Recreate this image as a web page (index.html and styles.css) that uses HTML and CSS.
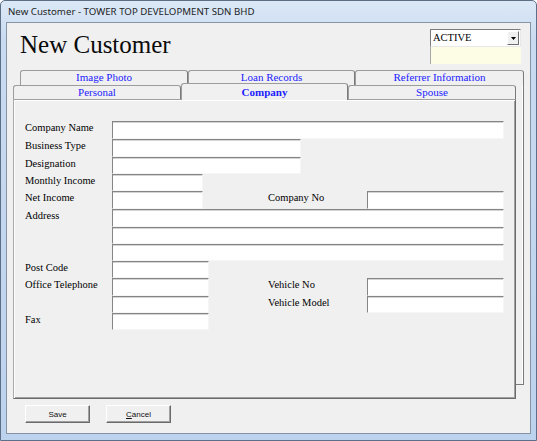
FILE: index.html
```html
<!DOCTYPE html>
<html lang="en">
<head>
    <meta charset="UTF-8">
    <title>New Customer</title>
    <link rel="stylesheet" href="styles.css">
</head>
<body>
    <div class="window">
        <div class="titlebar">New Customer - TOWER TOP DEVELOPMENT SDN BHD</div>
        <div class="client">
            <div class="header">
                <h1 class="form-title">New Customer</h1>
                <div class="status">
                    <div class="status-select">
                        <span class="status-value">ACTIVE</span>
                        <span class="drop-btn">
                            <svg width="5" height="3" viewBox="0 0 5 3"><path d="M0 0h5L2.5 3z" fill="#000"/></svg>
                        </span>
                    </div>
                    <div class="status-note"></div>
                </div>
            </div>

            <div class="tab-control">
                <div class="tab-row tab-row-back">
                    <div class="tab tab-a">Image Photo</div>
                    <div class="tab tab-b">Loan Records</div>
                    <div class="tab tab-c">Referrer Information</div>
                </div>
                <div class="tab-row tab-row-front">
                    <div class="tab tab-a">Personal</div>
                    <div class="tab tab-b selected">Company</div>
                    <div class="tab tab-a">Spouse</div>
                </div>
                <div class="tab-page">
                    <div class="form-grid">
                        <label class="lbl">Company Name</label>
                        <input class="field full" type="text">

                        <label class="lbl">Business Type</label>
                        <input class="field mid" type="text">

                        <label class="lbl">Designation</label>
                        <input class="field mid" type="text">

                        <label class="lbl">Monthly Income</label>
                        <input class="field small" type="text">

                        <label class="lbl">Net Income</label>
                        <input class="field small" type="text">
                        <label class="lbl right">Company No</label>
                        <input class="field side" type="text">

                        <label class="lbl">Address</label>
                        <input class="field full" type="text">
                        <input class="field full" type="text">
                        <input class="field full" type="text">

                        <label class="lbl">Post Code</label>
                        <input class="field short" type="text">

                        <label class="lbl">Office Telephone</label>
                        <input class="field short" type="text">
                        <label class="lbl right">Vehicle No</label>
                        <input class="field side" type="text">

                        <input class="field short" type="text">
                        <label class="lbl right">Vehicle Model</label>
                        <input class="field side" type="text">

                        <label class="lbl">Fax</label>
                        <input class="field short" type="text">
                    </div>
                </div>
            </div>

            <div class="buttons">
                <button class="btn">Save</button>
                <button class="btn"><u>C</u>ancel</button>
            </div>
        </div>
    </div>
</body>
</html>
```

FILE: styles.css
```css
html, body { margin: 0; padding: 0; background: #fff; }

/* Win7 style window frame */
.window {
    width: 537px;
    height: 441px;
    box-sizing: border-box;
    border: 1px solid #5d6f86;
    border-radius: 5px 5px 0 0;
    padding: 0 5px 6px 5px;
    background: linear-gradient(180deg, #dce8f6 0, #c9dbf1 40px, #bdd2ed 100%);
}

.titlebar {
    height: 21px;
    line-height: 22px;
    padding-left: 2px;
    font-family: "Noto Sans", "Open Sans", sans-serif;
    font-size: 9.7px;
    color: #1e1e1e;
    white-space: nowrap;
}

.client {
    height: 412px;
    box-sizing: border-box;
    border: 1px solid #8593a6;
    background: #f0f0f0;
    font-family: "Liberation Serif", "Times New Roman", serif;
}

/* header with title and status box */
.header {
    display: flex;
    justify-content: space-between;
    height: 47px;
    box-sizing: border-box;
    padding: 6px 9px 0 13px;
}

.form-title {
    margin: 3px 0 0 0;
    font-size: 25px;
    line-height: 25px;
    font-weight: normal;
    color: #0a0a0a;
}

.status { width: 91px; }

.status-select {
    display: flex;
    align-items: center;
    height: 18px;
    box-sizing: border-box;
    background: #fff;
    border: 1px solid #e8e8e8;
    border-top-color: #7c7c7c;
    border-left-color: #7c7c7c;
    padding: 0 1px 0 2px;
}

.status-value {
    flex: 1;
    font-size: 10.5px;
    line-height: 14px;
    color: #000;
}

.drop-btn {
    display: flex;
    align-items: center;
    justify-content: center;
    width: 12px;
    height: 14px;
    box-sizing: border-box;
    background: #f0f0f0;
    border: 1px solid;
    border-color: #fff #6f6f6f #6f6f6f #fff;
}

.status-note {
    height: 17px;
    box-sizing: border-box;
    background: #fdfce4;
    border-left: 1px solid #a8a8a8;
}

/* tab control */
.tab-control {
    position: relative;
    width: 511px;
    margin-left: 6px;
}

/* right edge of the back tab row, seen behind the page */
.tab-control::before {
    content: "";
    position: absolute;
    left: 503px;
    top: 15px;
    width: 7px;
    height: 299px;
    border-right: 1px solid #7a7a7a;
    border-bottom: 1px solid #7a7a7a;
    box-shadow: inset -1px 0 0 #fff;
}

.tab-row { display: flex; }
.tab-row-back { height: 15px; padding-left: 7px; }
.tab-row-front { height: 14px; }

.tab {
    box-sizing: border-box;
    height: 100%;
    border: 1px solid #9c9c9c;
    border-bottom: none;
    border-right-color: #7a7a7a;
    border-radius: 3px 3px 0 0;
    background: #f0f0f0;
    text-align: center;
    font-size: 11px;
    line-height: 13px;
    color: #1c1cff;
    white-space: nowrap;
}

.tab-a { width: 168px; }
.tab-b { width: 167px; }
.tab-c { width: 169px; }

.tab.selected {
    position: relative;
    z-index: 2;
    height: 17px;
    margin-top: -2px;
    font-weight: bold;
    line-height: 16px;
}

.tab-page {
    width: 503px;
    height: 300px;
    box-sizing: border-box;
    border: 1px solid;
    border-color: #a0a0a0 #6b6b6b #6b6b6b #a9a9a9;
    box-shadow: inset 1px 1px 0 #fff, inset -1px -1px 0 #a0a0a0;
    background: #f0f0f0;
}

/* form fields */
.form-grid {
    display: grid;
    grid-template-columns: 87px 155px 100px 137px;
    grid-template-rows: 18px 18px 17px 17px 18px 18px 17px 17px 17px 18px 17px 17px;
    padding: 21px 0 0 11px;
}

.lbl {
    grid-column: 1;
    align-self: start;
    font-size: 10.5px;
    line-height: 14px;
    color: #000;
    white-space: nowrap;
}

.lbl.right { grid-column: 3; padding-left: 1px; }

.field {
    box-sizing: border-box;
    height: 100%;
    margin: 0;
    padding: 0 2px;
    background: #fff;
    border: 1px solid #f6f6f6;
    border-top-color: #858585;
    border-left-color: #858585;
    box-shadow: inset 0 1px 0 #d4d4d4;
    font-family: "Liberation Serif", serif;
    font-size: 10.5px;
    outline: none;
}

.field.full { grid-column: 2 / 5; width: 392px; }
.field.mid { grid-column: 2 / 4; width: 189px; }
.field.small { grid-column: 2; width: 91px; }
.field.short { grid-column: 2; width: 97px; }
.field.side { grid-column: 4; width: 137px; }

/* bottom buttons */
.buttons {
    display: flex;
    gap: 16px;
    margin-top: 6px;
    padding-left: 18px;
}

.btn {
    width: 65px;
    height: 18px;
    padding: 0;
    box-sizing: border-box;
    background: #f0f0f0;
    border: 1px solid;
    border-color: #fff #6b6b6b #6b6b6b #fff;
    box-shadow: inset -1px -1px 0 #a0a0a0;
    font-family: "Liberation Sans", Arial, sans-serif;
    font-size: 8px;
    color: #111;
}
```
